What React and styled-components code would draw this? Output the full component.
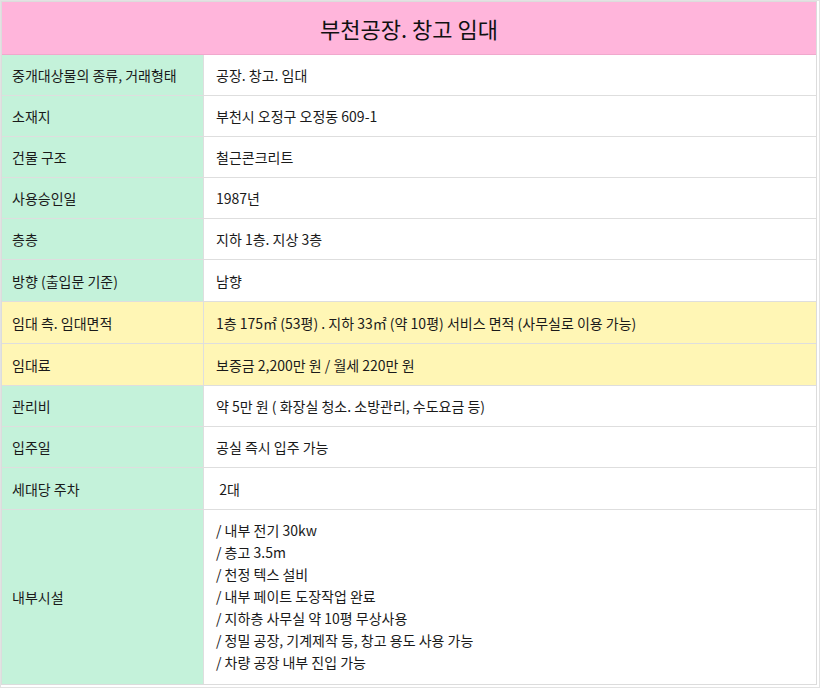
import styled, { createGlobalStyle } from 'styled-components'

const GlobalStyle = createGlobalStyle`
    html, body {
        margin: 0;
        padding: 0;
        background: #fff;
    }
    body {
        font-family: "Noto Sans CJK KR", "Noto Sans", sans-serif;
        color: #1a1a1a;
    }
`

const Frame = styled.div`
    width: 820px;
    box-sizing: border-box;
    border: 1px solid #e2e2e2;
    padding: 0 2px 2px 0;
`

const Table = styled.div`
    border: 1px solid #dcdcdc;
    display: flex;
    flex-direction: column;
`

const Title = styled.div`
    height: 52px;
    background: #ffb5db;
    display: flex;
    align-items: center;
    justify-content: center;
    font-size: 22px;
    color: #111;
    border-bottom: 1px solid #f0a8cd;
`

const Row = styled.div`
    display: grid;
    grid-template-columns: 202px 1fr;
    min-height: ${p => p.height}px;
    border-bottom: 1px solid #dedede;

    &:last-child {
        border-bottom: none;
    }
`

const Label = styled.div`
    background: ${p => (p.highlight ? '#fff6b5' : '#c4f2da')};
    border-right: 1px solid #dedede;
    display: flex;
    align-items: center;
    padding-left: 10px;
    font-size: 14px;
`

const Value = styled.div`
    background: ${p => (p.highlight ? '#fff6b5' : '#fff')};
    display: flex;
    flex-direction: column;
    justify-content: center;
    padding-left: 12px;
    padding-bottom: ${p => (p.multi ? 3 : 0)}px;
    font-size: 14px;
    line-height: 22px;
    white-space: pre;
`

const rows = [
    { label: '중개대상물의 종류, 거래형태', value: ['공장. 창고. 임대'], height: 40 },
    { label: '소재지', value: ['부천시 오정구 오정동 609-1'], height: 40 },
    { label: '건물 구조', value: ['철근콘크리트'], height: 40 },
    { label: '사용승인일', value: ['1987년'], height: 40 },
    { label: '층층', value: ['지하 1층. 지상 3층'], height: 40 },
    { label: '방향 (출입문 기준)', value: ['남향'], height: 41 },
    { label: '임대 측. 임대면적', value: ['1층 175㎡ (53평) . 지하 33㎡ (약 10평) 서비스 면적 (사무실로 이용 가능)'], height: 41, highlight: true },
    { label: '임대료', value: ['보증금 2,200만 원 / 월세 220만 원'], height: 41, highlight: true },
    { label: '관리비', value: ['약 5만 원 ( 화장실 청소. 소방관리, 수도요금 등)'], height: 40 },
    { label: '입주일', value: ['공실 즉시 입주 가능'], height: 40 },
    { label: '세대당 주차', value: [' 2대'], height: 41 },
    {
        label: '내부시설',
        value: [
            '/ 내부 전기 30kw',
            '/ 층고 3.5m',
            '/ 천정 텍스 설비',
            '/ 내부 페이트 도장작업 완료',
            '/ 지하층 사무실 약 10평 무상사용',
            '/ 정밀 공장, 기계제작 등, 창고 용도 사용 가능',
            '/ 차량 공장 내부 진입 가능',
        ],
        height: 174,
    },
]

export default function App() {
    return (
        <>
            <GlobalStyle />
            <Frame>
                <Table>
                    <Title>부천공장. 창고 임대</Title>
                    {rows.map(r => (
                        <Row key={r.label} height={r.height}>
                            <Label highlight={r.highlight}>{r.label}</Label>
                            <Value highlight={r.highlight} multi={r.value.length > 1}>
                                {r.value.map(line => (
                                    <span key={line}>{line}</span>
                                ))}
                            </Value>
                        </Row>
                    ))}
                </Table>
            </Frame>
        </>
    )
}
